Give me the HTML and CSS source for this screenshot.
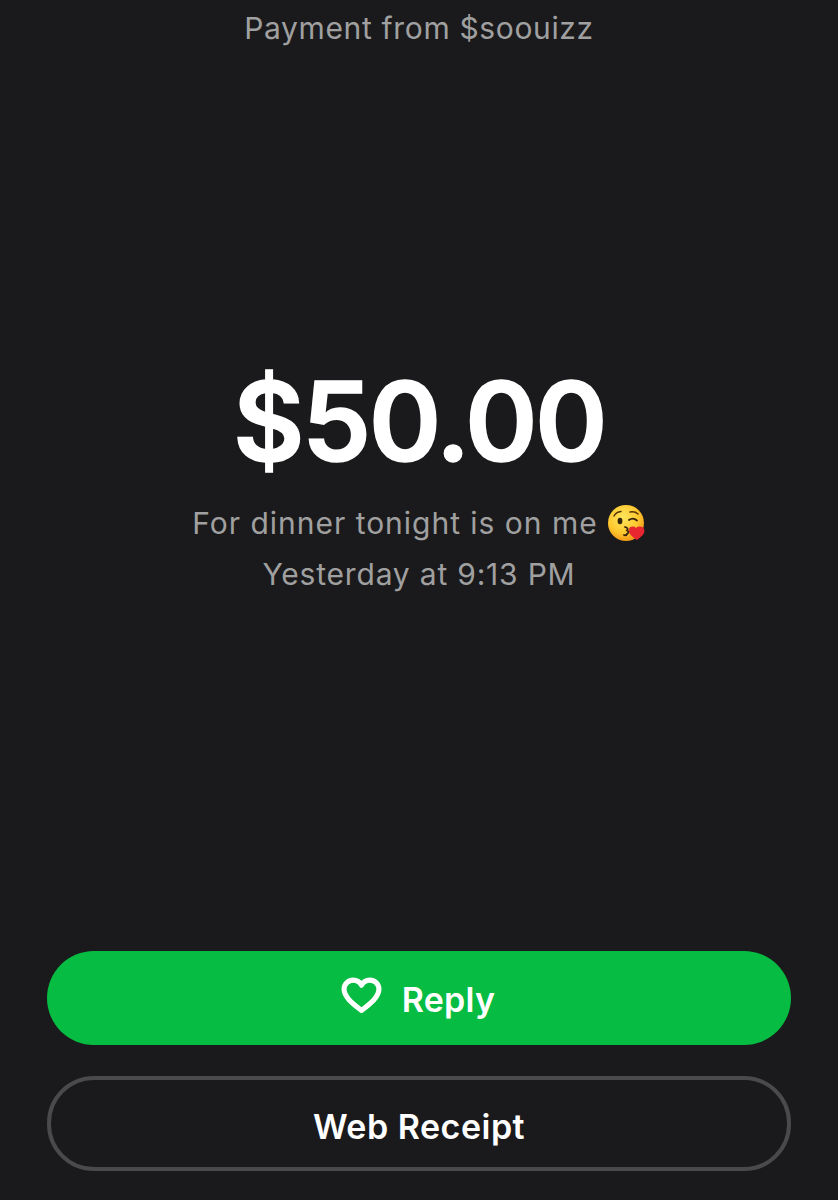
FILE: index.html
```html
<!DOCTYPE html>
<html lang="en">
<head>
<meta charset="utf-8">
<title>Payment</title>
<link rel="stylesheet" href="styles.css">
</head>
<body>
<main class="screen">
  <p class="from">Payment from $soouizz</p>
  <h1 class="amount">$50.00</h1>
  <p class="note">For dinner tonight is on me
    <svg class="emoji" viewBox="0 0 38 38" aria-hidden="true">
      <defs>
        <radialGradient id="face" cx="42%" cy="35%" r="70%">
          <stop offset="0" stop-color="#ffe45c"/>
          <stop offset="0.6" stop-color="#fdc82f"/>
          <stop offset="1" stop-color="#ee8f14"/>
        </radialGradient>
      </defs>
      <circle cx="18" cy="19" r="18" fill="url(#face)"/>
      <path d="M6 12q2-4 7-4.500M22 8q5-1 8 2" fill="none" stroke="#5a3608" stroke-width="1.500" stroke-linecap="round"/>
      <ellipse cx="12" cy="17" rx="2.400" ry="3.200" fill="#33220c"/>
      <path d="M21 16q4-3 8 0.500" fill="none" stroke="#33220c" stroke-width="1.800" stroke-linecap="round"/>
      <path d="M17 23q4 1 2 3.500q3 1 0 3.500q-1 2-3 1" fill="none" stroke="#33220c" stroke-width="1.800" stroke-linecap="round"/>
      <path d="M29 36c-5-3-9-7-8-11c1-3 5-3 7-1c2-2 7-2 8 1c2 4-3 8-7 11z" fill="#e8262f"/>
    </svg>
  </p>
  <p class="time">Yesterday at 9:13 PM</p>
  <div class="actions">
    <button class="btn btn-primary">
      <svg class="heart" viewBox="0 0 40 36" preserveAspectRatio="none" aria-hidden="true">
        <path d="M20 32.500C13 27 3 20 3 12C3 6.500 7.300 3 12 3C15.500 3 18.500 5 20 8C21.500 5 24.500 3 28 3C32.700 3 37 6.500 37 12C37 20 27 27 20 32.500Z" fill="none" stroke="#fff" stroke-width="5" stroke-linejoin="round"/>
      </svg>
      <span class="label">Reply</span>
    </button>
    <button class="btn btn-outline"><span class="label">Web Receipt</span></button>
  </div>
</main>
</body>
</html>
```
FILE: styles.css
```css
* { box-sizing: border-box; }
html, body { margin: 0; height: 100%; }
body {
  background: #1a1a1c;
  font-family: Inter, "Liberation Sans", sans-serif;
  overflow: hidden;
}
.screen {
  height: 1200px;
  display: flex;
  flex-direction: column;
  align-items: center;
  padding: 8px 47px 29px;
}
.from, .note, .time {
  margin: 0;
  color: #a0a0a0;
  font-size: 30px;
  line-height: 40px;
  letter-spacing: 0.65px;
}
.amount {
  margin: 301px 0 0;
  color: #fff;
  font-size: 110px;
  font-weight: 600;
  line-height: 144px;
  letter-spacing: -2.6px;
  -webkit-text-stroke: 1.5px #fff;
}
.note {
  margin-top: 10px;
  display: flex;
  align-items: center;
  gap: 10px;
  letter-spacing: 0.98px;
}
.emoji { width: 38px; height: 38px; }
.time { margin-top: 11px; letter-spacing: 0.8px; }
.actions {
  margin-top: auto;
  width: 100%;
  display: flex;
  flex-direction: column;
  gap: 31px;
}
.btn {
  height: 94px;
  border-radius: 47px;
  width: 744px;
  font-family: inherit;
  font-size: 34px;
  font-weight: 600;
  color: #fff;
  display: flex;
  align-items: center;
  justify-content: center;
  padding: 0;
}
.btn-primary { background: #07bc42; border: 0; gap: 20px; }
.btn-primary .label { margin: 2px 2px 0 0; letter-spacing: 0.2px; }
.btn-outline { background: transparent; border: 4px solid #4a4a4c; height: 95px; }
.btn-outline .label { margin-top: 5px; letter-spacing: 0.5px; }
.heart { width: 41px; height: 37px; margin-top: -6px; }
```
